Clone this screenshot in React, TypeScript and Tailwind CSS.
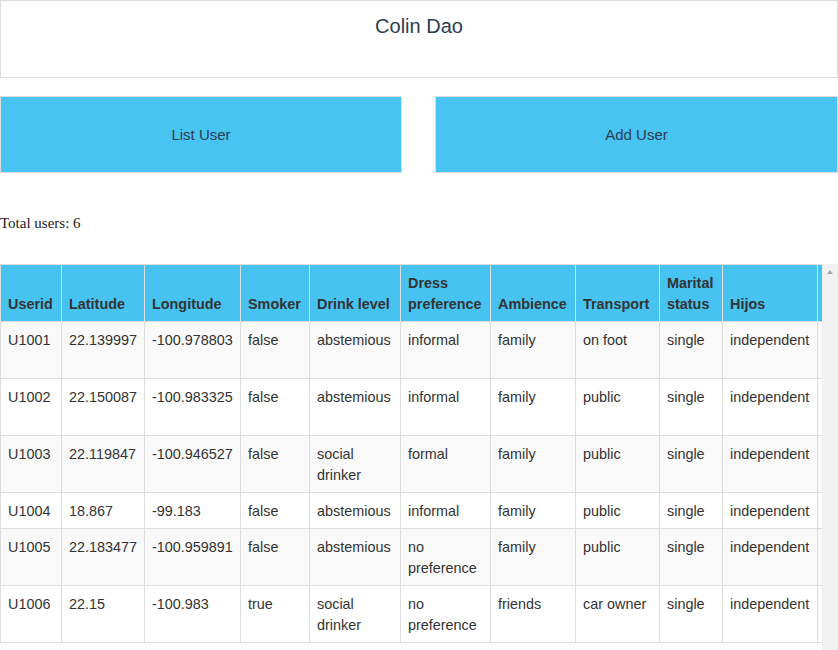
import React from 'react'

const columns = [
  { label: 'Userid', width: 61 },
  { label: 'Latitude', width: 83 },
  { label: 'Longitude', width: 96 },
  { label: 'Smoker', width: 69 },
  { label: 'Drink level', width: 91 },
  { label: 'Dress preference', width: 90 },
  { label: 'Ambience', width: 85 },
  { label: 'Transport', width: 84 },
  { label: 'Marital status', width: 63 },
  { label: 'Hijos', width: 95 },
  { label: '', width: 60 },
]

const users = [
  ['U1001', '22.139997', '-100.978803', 'false', 'abstemious', 'informal', 'family', 'on foot', 'single', 'independent'],
  ['U1002', '22.150087', '-100.983325', 'false', 'abstemious', 'informal', 'family', 'public', 'single', 'independent'],
  ['U1003', '22.119847', '-100.946527', 'false', 'social drinker', 'formal', 'family', 'public', 'single', 'independent'],
  ['U1004', '18.867', '-99.183', 'false', 'abstemious', 'informal', 'family', 'public', 'single', 'independent'],
  ['U1005', '22.183477', '-100.959891', 'false', 'abstemious', 'no preference', 'family', 'public', 'single', 'independent'],
  ['U1006', '22.15', '-100.983', 'true', 'social drinker', 'no preference', 'friends', 'car owner', 'single', 'independent'],
]

const rowHeights = ['h-[57px]', 'h-[57px]', '', '', '', '']

export default function App() {
  return (
    <div className="bg-white font-['Liberation_Sans',Arial,sans-serif]">
      {/* header */}
      <div className="h-[78px] border border-[#dddddd] pt-[14px] text-center">
        <h1 className="text-[20px] leading-[23px] text-[#2c3e50]">Colin Dao</h1>
      </div>

      {/* nav buttons */}
      <div className="mt-[18px] flex gap-[33px]">
        <button className="h-[77px] w-[402px] border border-[#dddddd] bg-[#48c4f2] pt-[2px] text-[15px] text-[#2c3e50]">
          List User
        </button>
        <button className="h-[77px] flex-1 border border-[#dddddd] bg-[#48c4f2] pt-[2px] text-[15px] text-[#2c3e50]">
          Add User
        </button>
      </div>

      <p className="mt-[42px] h-[17px] font-['Liberation_Serif','Times_New_Roman',serif] text-[15px] leading-[17px] text-[#222]">
        Total users: 6
      </p>

      {/* users table + scrollbar track */}
      <div className="mt-[32px] flex h-[420px]">
        <div className="min-w-0 flex-1 overflow-hidden">
          <table className="table-fixed border-collapse text-left text-[14.4px] leading-[21px] text-[#333]" style={{ width: columns.reduce((s, c) => s + c.width, 0) }}>
            <colgroup>
              {columns.map((c, i) => (
                <col key={i} style={{ width: c.width }} />
              ))}
            </colgroup>
            <thead>
              <tr className="bg-[#47c3f1]">
                {columns.map((c, i) => (
                  <th key={i} className="border border-[#dddddd] pb-[6px] pl-[7px] pr-2 pt-[8px] align-bottom font-bold">
                    {c.label}
                  </th>
                ))}
              </tr>
            </thead>
            <tbody>
              {users.map((row, i) => (
                <tr key={row[0]} className={`${rowHeights[i]} ${i % 2 === 0 ? 'bg-[#f9f9f9]' : 'bg-white'}`}>
                  {row.map((cell, j) => (
                    <td key={j} className="border border-[#dddddd] pb-[6px] pl-[7px] pr-2 pt-[8px] align-top">
                      {cell}
                    </td>
                  ))}
                  <td className="border border-[#dddddd]" />
                </tr>
              ))}
            </tbody>
          </table>
        </div>
        <div className="flex w-[16px] shrink-0 justify-center bg-[#f1f1f1] pt-[6px]">
          <div className="h-0 w-0 border-x-[3px] border-b-[4px] border-x-transparent border-b-[#a3a3a3]" />
        </div>
      </div>
    </div>
  )
}
